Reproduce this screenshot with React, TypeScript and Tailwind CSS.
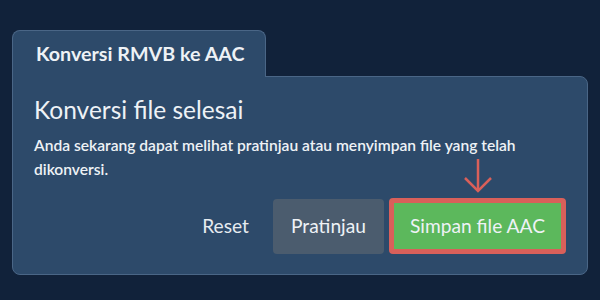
import React from 'react';

export default function App() {
  return (
    <div className="w-[600px] h-[300px] bg-[#11223a] pt-[30px] px-[12px] font-['Lato',sans-serif] text-[#eef2f6]">
      {/* tab */}
      <div className="relative z-10 -mb-px w-[254px] h-[47px] flex items-center pl-[23px] bg-[#2d4a6a] border border-b-0 border-[#4a6686] rounded-t-[8px]">
        <span className="text-[19.7px] font-bold">Konversi RMVB ke AAC</span>
      </div>

      {/* panel */}
      <div className="h-[199px] bg-[#2d4a6a] border border-[#4a6686] rounded-b-[8px] rounded-tr-[8px] px-[21px] pt-[17px] pb-[20px] flex flex-col">
        <h2 className="text-[24.5px] leading-[32px]">Konversi file selesai</h2>
        <p className="mt-[7px] text-[15.6px] leading-[24px] font-semibold w-[530px]">
          Anda sekarang dapat melihat pratinjau atau menyimpan file yang telah dikonversi.
        </p>

        <div className="mt-auto flex items-center justify-end gap-[5px]">
          <button className="mr-[19px] text-[19.2px] text-[#e6ebf0]">Reset</button>
          <button className="w-[111px] h-[55px] rounded-[4px] bg-[#4b5c6e] text-[19.2px]">Pratinjau</button>
          <div className="relative">
            <svg className="absolute left-1/2 -translate-x-1/2 -top-[40px]" width="30" height="36" viewBox="0 0 30 36" fill="none" stroke="#d9605a" strokeWidth="2.5">
              <path d="M15 1 V33" />
              <path d="M2 20 L15 33 L28 20" />
            </svg>
            <button className="w-[177px] h-[56px] rounded-[4px] border-[5px] border-[#d9605a] bg-[#5cb85c] text-[19.2px]">Simpan file AAC</button>
          </div>
        </div>
      </div>
    </div>
  );
}
